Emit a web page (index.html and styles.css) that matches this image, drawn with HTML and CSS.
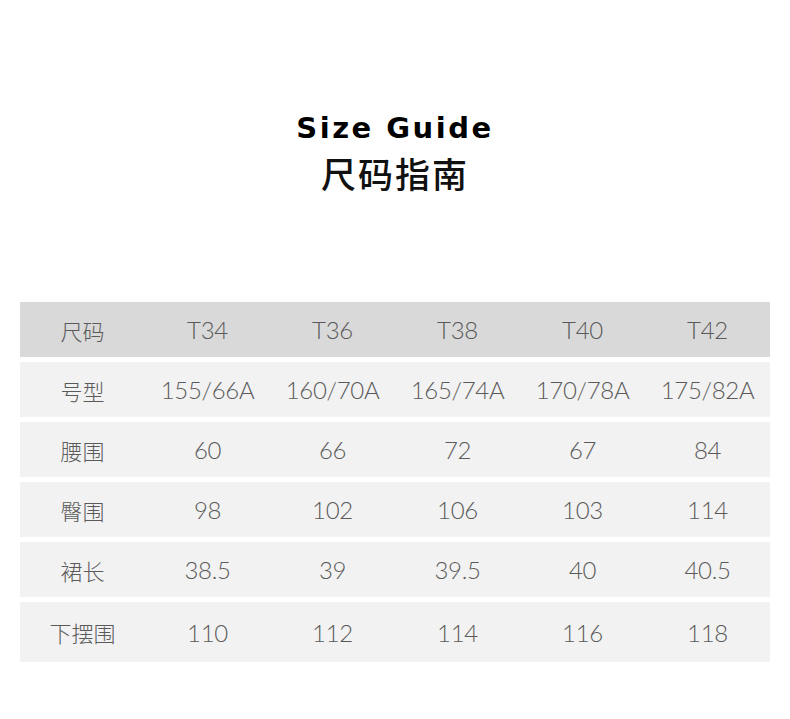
FILE: index.html
```html
<!DOCTYPE html>
<html lang="zh">
<head>
<meta charset="utf-8">
<title>Size Guide</title>
<link rel="stylesheet" href="styles.css">
</head>
<body>
<div class="page">
  <header class="heading">
    <h1 class="title-en">Size Guide</h1>
    <h2 class="title-cn">尺码指南</h2>
  </header>
  <div class="table">
    <div class="row head">
      <div class="cell label">尺码</div>
      <div class="cell">T34</div>
      <div class="cell">T36</div>
      <div class="cell">T38</div>
      <div class="cell">T40</div>
      <div class="cell">T42</div>
    </div>
    <div class="row">
      <div class="cell label">号型</div>
      <div class="cell">155/66A</div>
      <div class="cell">160/70A</div>
      <div class="cell">165/74A</div>
      <div class="cell">170/78A</div>
      <div class="cell">175/82A</div>
    </div>
    <div class="row">
      <div class="cell label">腰围</div>
      <div class="cell">60</div>
      <div class="cell">66</div>
      <div class="cell">72</div>
      <div class="cell">67</div>
      <div class="cell">84</div>
    </div>
    <div class="row">
      <div class="cell label">臀围</div>
      <div class="cell">98</div>
      <div class="cell">102</div>
      <div class="cell">106</div>
      <div class="cell">103</div>
      <div class="cell">114</div>
    </div>
    <div class="row">
      <div class="cell label">裙长</div>
      <div class="cell">38.5</div>
      <div class="cell">39</div>
      <div class="cell">39.5</div>
      <div class="cell">40</div>
      <div class="cell">40.5</div>
    </div>
    <div class="row last">
      <div class="cell label">下摆围</div>
      <div class="cell">110</div>
      <div class="cell">112</div>
      <div class="cell">114</div>
      <div class="cell">116</div>
      <div class="cell">118</div>
    </div>
  </div>
</div>
</body>
</html>
```
FILE: styles.css
```css
html, body {
  margin: 0;
  padding: 0;
  background: #ffffff;
}
.page {
  width: 790px;
  height: 719px;
  padding-top: 110px;
  box-sizing: border-box;
}
.heading {
  display: flex;
  flex-direction: column;
  align-items: center;
}
.title-en {
  margin: 0;
  font-family: "DejaVu Sans", "Lato", sans-serif;
  font-weight: 700;
  font-size: 29px;
  line-height: 36px;
  letter-spacing: 2.5px;
  color: #000;
}
.title-cn {
  margin: 5px 0 0;
  font-family: "Noto Sans CJK SC", sans-serif;
  font-weight: 500;
  font-size: 35px;
  line-height: 44px;
  letter-spacing: 2px;
  color: #111;
}
.table {
  margin: 107px 20px 0;
  display: flex;
  flex-direction: column;
  gap: 5px;
}
.row {
  display: grid;
  grid-template-columns: repeat(6, 1fr);
  height: 55px;
  background: #f2f2f2;
}
.row.head {
  background: #d9d9d9;
}
.row.last {
  height: 60px;
}
.cell {
  display: flex;
  align-items: center;
  justify-content: center;
  font-family: "Lato", "Noto Sans CJK SC", sans-serif;
  font-weight: 300;
  font-size: 24px;
  color: #5a5a5a;
  letter-spacing: -0.3px;
}
.cell.label {
  font-family: "Noto Sans CJK SC", sans-serif;
  font-weight: 300;
  font-size: 22px;
  letter-spacing: 0;
}
```
